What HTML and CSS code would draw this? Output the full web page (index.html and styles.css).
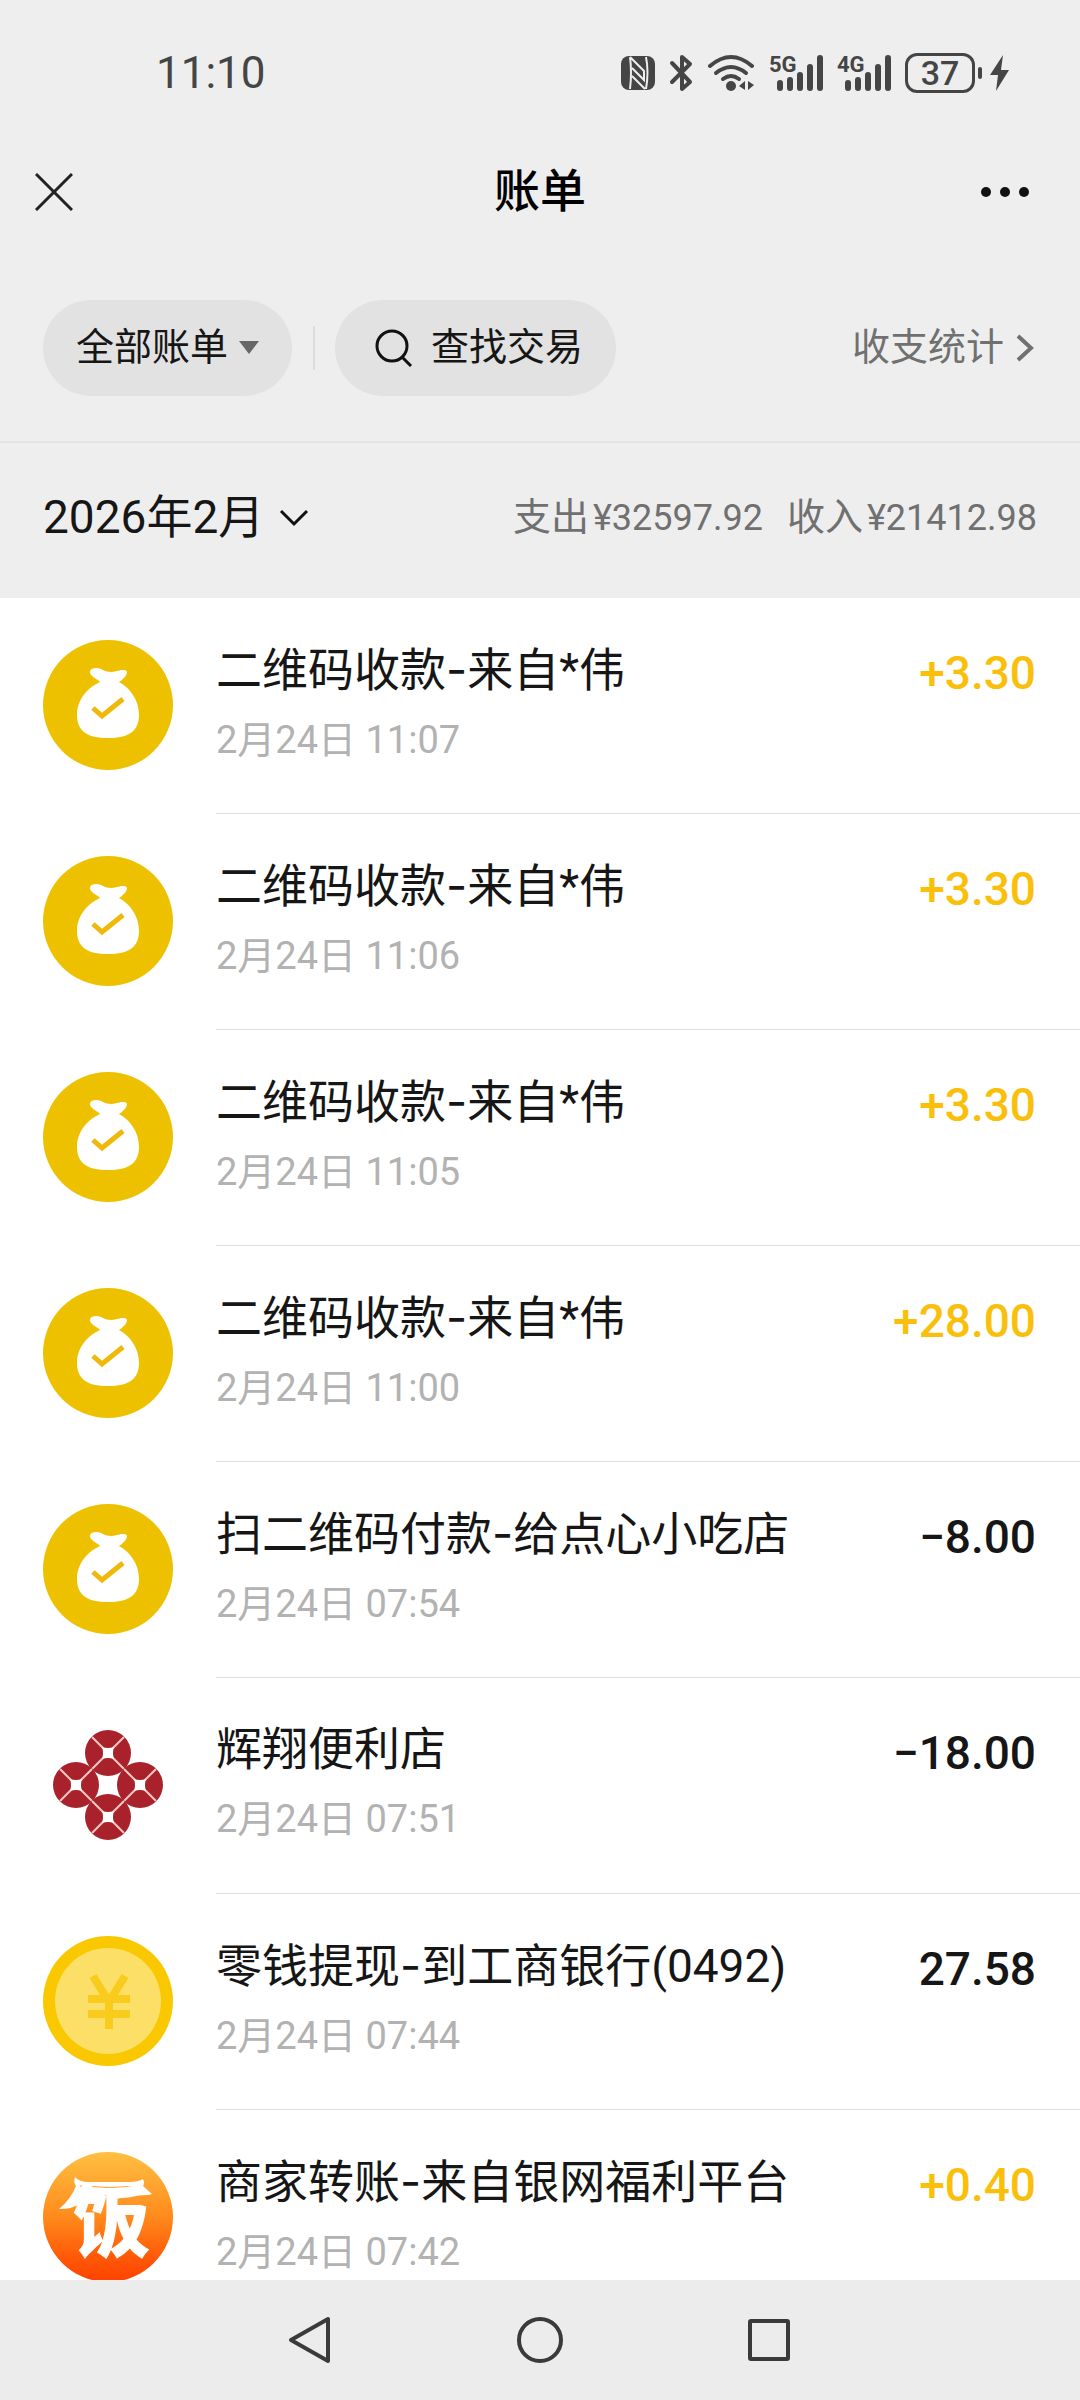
FILE: index.html
```
<!DOCTYPE html>
<html lang="zh-CN">
<head>
  <meta charset="UTF-8">
  <title>账单</title>
  <meta name="viewport" content="width=device-width, initial-scale=1.0">
  <link rel="stylesheet" href="styles.css">
</head>
<body>
  <!-- shared icons -->
  <svg class="sprite" aria-hidden="true">
    <symbol id="bag" viewBox="0 0 130 130">
      <circle cx="65" cy="65" r="65" fill="#eec100"/>
      <path d="M57 42 C53 38 46 36 47 31 C48 28 54 27 58 29 C63 32 68 33 74 31 C78 30 83 29 84 32 C84 36 79 40 76 42 C87 48 96 60 96 75 C96 91 86 98 65 98 C44 98 34 91 34 75 C34 60 44 48 57 42 Z" fill="#fff"/>
      <path d="M50 68 L59 76 L80 59" fill="none" stroke="#f0b90a" stroke-width="5"/>
    </symbol>
    <symbol id="petal" viewBox="-23 -23 46 46">
      <circle r="23" fill="#a9212b"/>
      <path d="M-16 -16 L16 16 M16 -16 L-16 16" stroke="#f3c9c6" stroke-width="2"/>
      <path d="M-6 -6 Q0 -4 6 -6 Q4 0 6 6 Q0 4 -6 6 Q-4 0 -6 -6 Z" fill="#fff"/>
    </symbol>
  </svg>

  <header class="status-bar">
    <span class="clock">11:10</span>
    <div class="status-icons">
      <svg width="34" height="38" viewBox="0 0 34 38">
        <rect y="2" width="34" height="34" rx="8" fill="#454545"/>
        <path d="M9 3 Q11 18 9 35 M9 3 L23 17 V26 L11 14 M11 22 L24 35 M25 3 Q28 18 25 35" fill="none" stroke="#eee" stroke-width="2"/>
      </svg>
      <svg class="bluetooth" width="24" height="38" viewBox="0 0 24 38">
        <path d="M3 9 L21 28 L13 35 V3 L21 10 L3 28" fill="none" stroke="#454545" stroke-width="4" stroke-linecap="round" stroke-linejoin="round"/>
      </svg>
      <svg class="wifi" width="48" height="38" viewBox="0 0 48 38">
        <g fill="none" stroke="#454545" stroke-width="4" stroke-linecap="round">
          <path d="M3 12 Q24 -6 45 12"/>
          <path d="M9 19 Q24 7 39 19"/>
          <path d="M16 25 Q24 19 32 25"/>
        </g>
        <circle cx="24" cy="32" r="5" fill="#454545"/>
        <path d="M38 27 V36 L32 32 Z M41 27 L47 31 L41 36 Z" fill="#454545"/>
      </svg>
      <svg class="signal" width="54" height="54" viewBox="0 -8 54 54">
        <text class="net-label" x="0" y="18">5G</text>
        <path d="M11 29 V34 M21 26 V34 M31 21 V34 M41 13 V34 M51 4 V34" stroke="#454545" stroke-width="6" stroke-linecap="round"/>
      </svg>
      <svg class="signal" width="54" height="54" viewBox="0 -8 54 54">
        <text class="net-label" x="0" y="18">4G</text>
        <path d="M11 29 V34 M21 26 V34 M31 21 V34 M41 13 V34 M51 4 V34" stroke="#454545" stroke-width="6" stroke-linecap="round"/>
      </svg>
      <span class="battery">37</span>
      <svg width="32" height="38" viewBox="0 0 32 38">
        <rect y="13" width="4" height="12" rx="2" fill="#454545"/>
        <path d="M25 1 L12 21 H20 L18 37 L31 16 H23 Z" fill="#454545"/>
      </svg>
    </div>
  </header>

  <nav class="title-bar">
    <button class="icon-btn" aria-label="关闭">
      <svg width="38" height="38" viewBox="0 0 38 38"><path d="M1 1 L37 37 M37 1 L1 37" stroke="#222" stroke-width="3"/></svg>
    </button>
    <h1>账单</h1>
    <button class="icon-btn more" aria-label="更多">
      <svg width="50" height="12" viewBox="0 0 50 12" fill="#111"><circle cx="6" cy="6" r="5"/><circle cx="25" cy="6" r="5"/><circle cx="44" cy="6" r="5"/></svg>
    </button>
  </nav>

  <section class="filters">
    <button class="pill">全部账单
      <svg width="20" height="14" viewBox="0 0 20 14"><path d="M0 0 H20 L10 13 Z" fill="#666"/></svg>
    </button>
    <span class="separator"></span>
    <button class="pill search">
      <svg width="38" height="38" viewBox="0 0 38 38"><circle cx="17" cy="17" r="15" fill="none" stroke="#111" stroke-width="3"/><path d="M27 28 L36 37" stroke="#111" stroke-width="3"/></svg>
      查找交易
    </button>
    <a class="stats" href="#">收支统计
      <svg width="18" height="28" viewBox="0 0 18 28"><path d="M2 2 L15 14 L2 26" fill="none" stroke="#707070" stroke-width="4"/></svg>
    </a>
  </section>

  <section class="month-bar">
    <button class="month">2026年2月
      <svg width="30" height="18" viewBox="0 0 30 18"><path d="M2 2 L15 15 L28 2" fill="none" stroke="#111" stroke-width="3"/></svg>
    </button>
    <p class="totals"><span>支出<b>¥32597.92</b></span><span>收入<b>¥21412.98</b></span></p>
  </section>

  <ul class="bills">
    <li>
      <svg class="avatar"><use href="#bag"/></svg>
      <div class="bill">
        <div class="info"><h2>二维码收款<span class="dash">-</span>来自*伟</h2><time>2月24日 11:07</time></div>
        <span class="amount income">+3.30</span>
      </div>
    </li>
    <li>
      <svg class="avatar"><use href="#bag"/></svg>
      <div class="bill">
        <div class="info"><h2>二维码收款<span class="dash">-</span>来自*伟</h2><time>2月24日 11:06</time></div>
        <span class="amount income">+3.30</span>
      </div>
    </li>
    <li>
      <svg class="avatar"><use href="#bag"/></svg>
      <div class="bill">
        <div class="info"><h2>二维码收款<span class="dash">-</span>来自*伟</h2><time>2月24日 11:05</time></div>
        <span class="amount income">+3.30</span>
      </div>
    </li>
    <li>
      <svg class="avatar"><use href="#bag"/></svg>
      <div class="bill">
        <div class="info"><h2>二维码收款<span class="dash">-</span>来自*伟</h2><time>2月24日 11:00</time></div>
        <span class="amount income">+28.00</span>
      </div>
    </li>
    <li>
      <svg class="avatar"><use href="#bag"/></svg>
      <div class="bill">
        <div class="info"><h2>扫二维码付款<span class="dash">-</span>给点心小吃店</h2><time>2月24日 07:54</time></div>
        <span class="amount">−8.00</span>
      </div>
    </li>
    <li>
      <svg class="avatar" viewBox="0 0 130 130">
        <use href="#petal" x="42" y="10" width="46" height="46"/>
        <use href="#petal" x="10" y="42" width="46" height="46"/>
        <use href="#petal" x="74" y="42" width="46" height="46"/>
        <use href="#petal" x="42" y="74" width="46" height="46"/>
      </svg>
      <div class="bill">
        <div class="info"><h2>辉翔便利店</h2><time>2月24日 07:51</time></div>
        <span class="amount">−18.00</span>
      </div>
    </li>
    <li>
      <svg class="avatar" viewBox="0 0 130 130">
        <circle cx="65" cy="65" r="65" fill="#fac800"/>
        <circle cx="65" cy="65" r="53" fill="#fcdf66"/>
        <path d="M50 40 L66 66 L82 40 M45 63 H87 M45 78 H87 M66 64 V93" fill="none" stroke="#f9cb1c" stroke-width="8"/>
      </svg>
      <div class="bill">
        <div class="info"><h2>零钱提现<span class="dash">-</span>到工商银行(0492)</h2><time>2月24日 07:44</time></div>
        <span class="amount">27.58</span>
      </div>
    </li>
    <li>
      <svg class="avatar" viewBox="0 0 130 130">
        <defs>
          <linearGradient id="sunset" x1="0" y1="0" x2="0" y2="1">
            <stop offset="0" stop-color="#ffc042"/>
            <stop offset="0.5" stop-color="#ff8a1c"/>
            <stop offset="0.8" stop-color="#ff5a08"/>
            <stop offset="1" stop-color="#ff4200"/>
          </linearGradient>
        </defs>
        <circle cx="65" cy="65" r="65" fill="url(#sunset)"/>
        <path d="M32 25 Q36 30 46 30 H86 Q96 30 100 27 Q102 31 100 34 L109 42 Q104 44 95 43 H48 Q34 58 16 57 Q28 47 33 34 Q30 30 32 25 Z" fill="#fff"/>
        <path d="M37 34 Q66 37 97 34" fill="none" stroke="#ff9c2a" stroke-width="1"/>
        <text class="rice" x="69" y="99" text-anchor="middle">饭</text>
      </svg>
      <div class="bill">
        <div class="info"><h2>商家转账<span class="dash">-</span>来自银网福利平台</h2><time>2月24日 07:42</time></div>
        <span class="amount income">+0.40</span>
      </div>
    </li>
  </ul>

  <footer class="nav-keys">
    <button class="icon-btn" aria-label="返回">
      <svg width="48" height="48" viewBox="0 0 48 48"><path d="M41 3 V45 L4 24 Z"/></svg>
    </button>
    <button class="icon-btn" aria-label="主页">
      <svg width="48" height="48" viewBox="0 0 48 48"><circle cx="24" cy="24" r="21"/></svg>
    </button>
    <button class="icon-btn" aria-label="最近任务">
      <svg width="48" height="48" viewBox="0 0 48 48"><rect x="5" y="5" width="38" height="38" rx="1"/></svg>
    </button>
  </footer>
</body>
</html>
```
FILE: styles.css
```
* {
  box-sizing: border-box;
}

body {
  margin: 0;
  height: 100vh;
  display: flex;
  flex-direction: column;
  overflow: hidden;
  background: #eee;
  color: #161616;
  font-family: Roboto, "Noto Sans CJK SC", sans-serif;
  line-height: 1.2;
}

button {
  border: none;
  background: none;
  padding: 0;
  color: inherit;
  font-family: inherit;
  line-height: inherit;
  cursor: pointer;
}

svg {
  display: block;
  flex: none;
}

h1,
h2,
p,
ul {
  margin: 0;
  padding: 0;
}

.sprite {
  position: absolute;
  width: 0;
  height: 0;
}

/* status bar */
.status-bar {
  flex: none;
  height: 146px;
  padding: 0 70px 0 156px;
  display: flex;
  align-items: center;
  justify-content: space-between;
  color: #454545;
}

.clock {
  font-size: 44px;
}

.status-icons {
  display: flex;
  align-items: center;
}

.bluetooth,
.wifi,
.signal {
  margin-left: 14px;
}

.net-label {
  font-size: 22px;
  font-weight: 700;
  fill: #454545;
}

.battery {
  width: 70px;
  height: 40px;
  margin: 0 3px 0 14px;
  border: 3px solid #454545;
  border-radius: 12px;
  font-size: 34px;
  font-weight: 500;
  line-height: 34px;
  text-align: center;
}

/* title bar */
.title-bar {
  flex: none;
  height: 92px;
  padding: 0 50px 0 35px;
  display: grid;
  grid-template-columns: 1fr auto 1fr;
  align-items: center;
}

.title-bar h1 {
  padding-left: 15px;
  color: #000;
  font-size: 46px;
  font-weight: 500;
}

.icon-btn {
  display: flex;
}

.more {
  justify-self: end;
}

/* filters */
.filters {
  flex: none;
  height: 205px;
  padding: 16px 46px 0 43px;
  display: flex;
  align-items: center;
  border-bottom: 2px solid #e5e5e5;
}

.pill {
  height: 96px;
  padding: 0 33px;
  display: flex;
  align-items: center;
  gap: 11px;
  border-radius: 48px;
  background: #e2e2e2;
  font-size: 38px;
}

.search {
  gap: 18px;
  padding: 0 33px 0 40px;
}

.separator {
  width: 2px;
  height: 44px;
  margin: 0 20px 0 21px;
  background: #dcdcdc;
}

.stats {
  margin-left: auto;
  display: flex;
  align-items: center;
  gap: 12px;
  color: #707070;
  font-size: 38px;
  text-decoration: none;
}

/* month summary */
.month-bar {
  flex: none;
  height: 155px;
  padding: 0 43px 6px;
  display: flex;
  align-items: center;
  justify-content: space-between;
}

.month {
  display: flex;
  align-items: center;
  gap: 15px;
  font-size: 46px;
}

.totals {
  display: flex;
  gap: 24px;
  color: #707070;
  font-size: 38px;
}

.totals b {
  margin-left: 4px;
  font-size: 36px;
  font-weight: 400;
}

/* bills */
.bills {
  flex: 1;
  min-height: 0;
  overflow: hidden;
  background: #fff;
  list-style: none;
}

.bills li {
  display: flex;
  height: 216px;
  padding-left: 43px;
}

.avatar {
  width: 130px;
  height: 130px;
  margin-top: 42px;
}

.bill {
  flex: 1;
  display: flex;
  justify-content: space-between;
  margin-left: 43px;
  padding: 43px 44px 0 0;
  border-bottom: 1px solid #dedede;
}

.bills h2 {
  margin-bottom: 14px;
  font-size: 46px;
  font-weight: 400;
  line-height: 56px;
}

.dash {
  font-family: Inter, sans-serif;
}

.bills time {
  display: block;
  color: #b2b2b2;
  font-size: 38px;
  line-height: 56px;
}

.amount {
  font-size: 46px;
  font-weight: 500;
  line-height: 64px;
}

.income {
  color: #fabf0a;
}

.rice {
  fill: #fff;
  font-family: "Noto Sans CJK SC", sans-serif;
  font-size: 78px;
  font-weight: 900;
}

/* system navigation */
.nav-keys {
  flex: none;
  height: 120px;
  display: flex;
  align-items: center;
  justify-content: center;
  gap: 181px;
  background: #ececec;
}

.nav-keys svg {
  fill: none;
  stroke: #3a3a3a;
  stroke-width: 4;
  stroke-linejoin: round;
}
```
